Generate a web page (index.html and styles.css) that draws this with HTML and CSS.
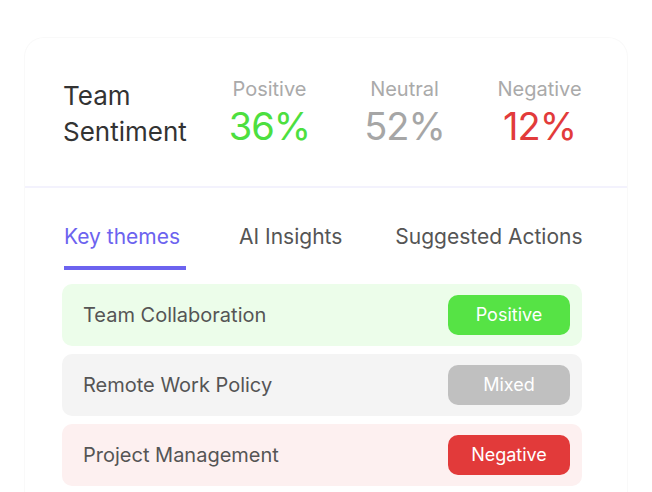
FILE: index.html
```html
<!DOCTYPE html>
<html lang="en">
<head>
  <meta charset="UTF-8">
  <title>Team Sentiment</title>
  <link rel="stylesheet" href="styles.css">
</head>
<body>
  <div class="card">
    <div class="summary">
      <h2 class="summary-title">Team<br>Sentiment</h2>
      <div class="stat">
        <p class="stat-label">Positive</p>
        <p class="stat-value positive">36%</p>
      </div>
      <div class="stat">
        <p class="stat-label">Neutral</p>
        <p class="stat-value neutral">52%</p>
      </div>
      <div class="stat">
        <p class="stat-label">Negative</p>
        <p class="stat-value negative">12%</p>
      </div>
    </div>

    <div class="tabs">
      <div class="tab active">Key themes</div>
      <div class="tab">AI Insights</div>
      <div class="tab">Suggested Actions</div>
    </div>

    <div class="themes">
      <div class="theme theme-positive">
        <span class="theme-name">Team Collaboration</span>
        <span class="badge badge-positive">Positive</span>
      </div>
      <div class="theme theme-mixed">
        <span class="theme-name">Remote Work Policy</span>
        <span class="badge badge-mixed">Mixed</span>
      </div>
      <div class="theme theme-negative">
        <span class="theme-name">Project Management</span>
        <span class="badge badge-negative">Negative</span>
      </div>
    </div>
  </div>
</body>
</html>
```

FILE: styles.css
```css
* {
  font-family: Inter, "Noto Sans", sans-serif;
  box-sizing: border-box;
}

body {
  margin: 0;
  background-color: #fff;
}

.card {
  width: 604px;
  height: 455px;
  margin: 37px 0 0 24px;
  background-color: #fff;
  border: 1px solid #f9f9f9;
  border-bottom: none;
  border-radius: 20px 20px 0 0;
}

.summary {
  display: grid;
  grid-template-columns: 139px repeat(3, 135px);
  align-items: start;
  padding: 40px 0 36px 38px;
  border-bottom: 2px solid #f3f2fd;
}

.summary-title {
  margin: 0;
  font-size: 26px;
  line-height: 36px;
  font-weight: 400;
  color: #333;
}

.stat {
  text-align: center;
  margin-top: -1px;
}

.stat-label {
  margin: 0 0 3px;
  font-size: 20px;
  line-height: 24px;
  color: #aaa;
}

.stat-value {
  margin: 0;
  font-size: 38px;
  line-height: 44px;
  letter-spacing: -1px;
}

.positive { color: #4ddf3f; }
.neutral { color: #a6a6a6; }
.negative { color: #e23b3b; }

.tabs {
  display: flex;
  gap: 53px;
  padding: 37px 0 0 39px;
}

.tab {
  font-size: 21px;
  line-height: 24px;
  padding-bottom: 17px;
  color: #555;
  border-bottom: 4px solid transparent;
}

.tab.active {
  min-width: 122px;
  color: #6c63ef;
  border-bottom-color: #6c63ef;
}

.themes {
  display: flex;
  flex-direction: column;
  gap: 8px;
  margin: 14px 0 0 37px;
  width: 520px;
}

.theme {
  display: flex;
  align-items: center;
  justify-content: space-between;
  height: 62px;
  padding: 0 12px 0 21px;
  border-radius: 10px;
}

.theme-name {
  font-size: 20px;
  color: #555;
}

.theme-positive { background-color: #ecfdea; }
.theme-mixed { background-color: #f4f4f4; }
.theme-negative { background-color: #fdf0f0; }

.badge {
  width: 122px;
  height: 40px;
  line-height: 40px;
  text-align: center;
  border-radius: 10px;
  font-size: 18px;
  color: #fff;
}

.badge-positive { background-color: #56e345; }
.badge-mixed { background-color: #c0c0c0; }
.badge-negative { background-color: #e23a3a; }
```
